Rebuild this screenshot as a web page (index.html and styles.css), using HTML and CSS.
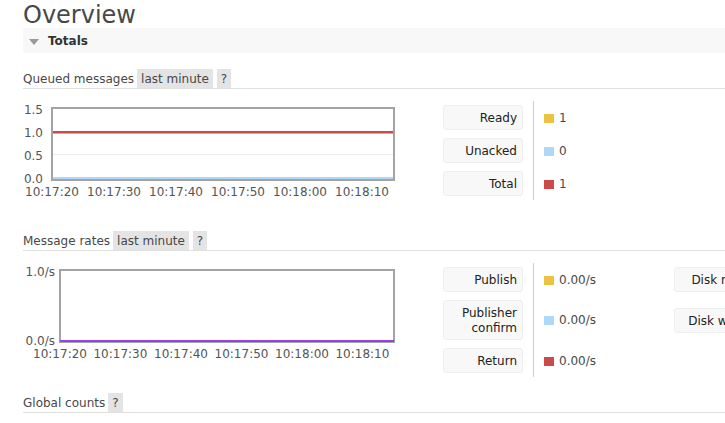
FILE: index.html
```html
<!DOCTYPE html>
<html>
<head>
<meta charset="utf-8">
<title>Overview</title>
<link rel="stylesheet" href="styles.css">
</head>
<body>
<div class="page">
  <h1 class="title">Overview</h1>
  <div class="section-bar"><span class="tri"></span><span class="bar-title">Totals</span></div>

  <h3 class="sub"><span class="sub-text">Queued messages</span><span class="tag tag-first">last minute</span><span class="tag">?</span></h3>
  <div class="sec-body">
    <svg class="chart" width="420" height="100" viewBox="0 0 420 100">
      <line x1="30" y1="53.5" x2="370" y2="53.5" stroke="#ececec" stroke-width="1"/>
      <line x1="30" y1="77" x2="370" y2="77" stroke="#afd8f8" stroke-width="2"/>
      <line x1="30" y1="32" x2="370" y2="32" stroke="#eba27a" stroke-width="2"/>
      <line x1="30" y1="31" x2="370" y2="31" stroke="#cb4b4b" stroke-width="2"/>
      <rect x="29" y="7" width="342" height="72" fill="none" stroke="#a3a3a3" stroke-width="2"/>
      <g class="tick" text-anchor="end">
        <text x="20" y="13">1.5</text>
        <text x="20" y="36">1.0</text>
        <text x="20" y="59">0.5</text>
        <text x="20" y="82">0.0</text>
      </g>
      <g class="tick" text-anchor="middle">
        <text x="29" y="95">10:17:20</text>
        <text x="91" y="95">10:17:30</text>
        <text x="153" y="95">10:17:40</text>
        <text x="215" y="95">10:17:50</text>
        <text x="277" y="95">10:18:00</text>
        <text x="339" y="95">10:18:10</text>
      </g>
    </svg>
    <table class="facts">
      <tr>
        <th><div class="lbl">Ready</div></th>
        <td><span class="key key-ready"></span>1</td>
      </tr>
      <tr>
        <th><div class="lbl">Unacked</div></th>
        <td><span class="key key-unacked"></span>0</td>
      </tr>
      <tr>
        <th><div class="lbl">Total</div></th>
        <td><span class="key key-total"></span>1</td>
      </tr>
    </table>
  </div>

  <h3 class="sub"><span class="sub-text">Message rates</span><span class="tag tag-first">last minute</span><span class="tag">?</span></h3>
  <div class="sec-body">
    <svg class="chart" width="420" height="100" viewBox="0 0 420 100">
      <rect x="37" y="7" width="334" height="72" fill="none" stroke="#a3a3a3" stroke-width="2"/>
      <line x1="37" y1="78" x2="371" y2="78" stroke="#9440ed" stroke-width="2"/>
      <g class="tick" text-anchor="end">
        <text x="32" y="13">1.0/s</text>
        <text x="32" y="82">0.0/s</text>
      </g>
      <g class="tick" text-anchor="middle">
        <text x="37" y="95">10:17:20</text>
        <text x="97.4" y="95">10:17:30</text>
        <text x="158" y="95">10:17:40</text>
        <text x="218.5" y="95">10:17:50</text>
        <text x="279" y="95">10:18:00</text>
        <text x="339.4" y="95">10:18:10</text>
      </g>
    </svg>
    <table class="facts">
      <tr>
        <th><div class="lbl">Publish</div></th>
        <td><span class="key key-ready"></span>0.00/s</td>
        <th class="th2"><div class="lbl">Disk read</div></th>
        <td></td>
      </tr>
      <tr>
        <th><div class="lbl">Publisher<br>confirm</div></th>
        <td><span class="key key-unacked"></span>0.00/s</td>
        <th class="th2"><div class="lbl">Disk write</div></th>
        <td></td>
      </tr>
      <tr>
        <th><div class="lbl">Return</div></th>
        <td><span class="key key-total"></span>0.00/s</td>
        <th class="th2"></th>
        <td></td>
      </tr>
    </table>
  </div>

  <h3 class="sub"><span class="sub-text">Global counts</span><span class="tag tag-first">?</span></h3>
</div>
</body>
</html>
```
FILE: styles.css
```css
html, body {
  margin: 0;
  padding: 0;
  overflow: hidden;
  background: #fff;
}

body {
  font-family: "DejaVu Sans", Verdana, sans-serif;
  font-size: 12px;
  color: #484848;
}

.page {
  width: 1000px;
  padding: 2px 0 0 23px;
}

.title {
  margin: 0;
  height: 26px;
  font-size: 24px;
  line-height: 26px;
  font-weight: normal;
  color: #484848;
}

.section-bar {
  display: flex;
  align-items: center;
  height: 25px;
  padding-left: 6px;
  background: #f8f8f8;
}

.tri {
  width: 0;
  height: 0;
  border-left: 5.5px solid transparent;
  border-right: 5.5px solid transparent;
  border-top: 6px solid #999;
  margin-right: 9px;
  margin-top: 2px;
}

.bar-title {
  font-weight: bold;
  color: #333;
}

.sub {
  margin: 16px 0 0 0;
  height: 19px;
  font-size: 12px;
  font-weight: normal;
  line-height: 21px;
  border-bottom: 1px solid #e0e0e0;
  color: #484848;
}

.sec-body + .sub {
  margin-top: 0;
}

.tag {
  display: inline-block;
  vertical-align: top;
  padding: 3px 4px 1px;
  line-height: 15px;
  background: #e4e4e4;
  margin-left: 4px;
}

.tag-first {
  margin-left: 3px;
}

.sec-body {
  display: flex;
  align-items: flex-start;
  padding-top: 12px;
  height: 130px;
}

.chart {
  display: block;
  flex: none;
}

.tick {
  font-family: "DejaVu Sans", Verdana, sans-serif;
  font-size: 12px;
  fill: #545454;
}

.facts {
  border-collapse: collapse;
  border-spacing: 0;
}

.facts th {
  padding: 4px 10px 4px 0;
  vertical-align: middle;
  font-weight: normal;
}

.facts td {
  border-left: 1px solid #cfcfcf;
  padding: 0 0 0 10px;
  width: 130px;
  vertical-align: middle;
  white-space: nowrap;
  color: #484848;
}

.lbl {
  box-sizing: border-box;
  width: 80px;
  padding: 5px 5px 3px;
  line-height: 15px;
  text-align: right;
  background: #f8f8f8;
  border: 1px solid #efefef;
  border-radius: 3px;
  color: #222;
}

.key {
  display: inline-block;
  width: 10px;
  height: 9px;
  margin-right: 5px;
  vertical-align: -1px;
}

.key-ready { background: #edc240; }
.key-unacked { background: #afd8f8; }
.key-total { background: #cb4b4b; }
```
